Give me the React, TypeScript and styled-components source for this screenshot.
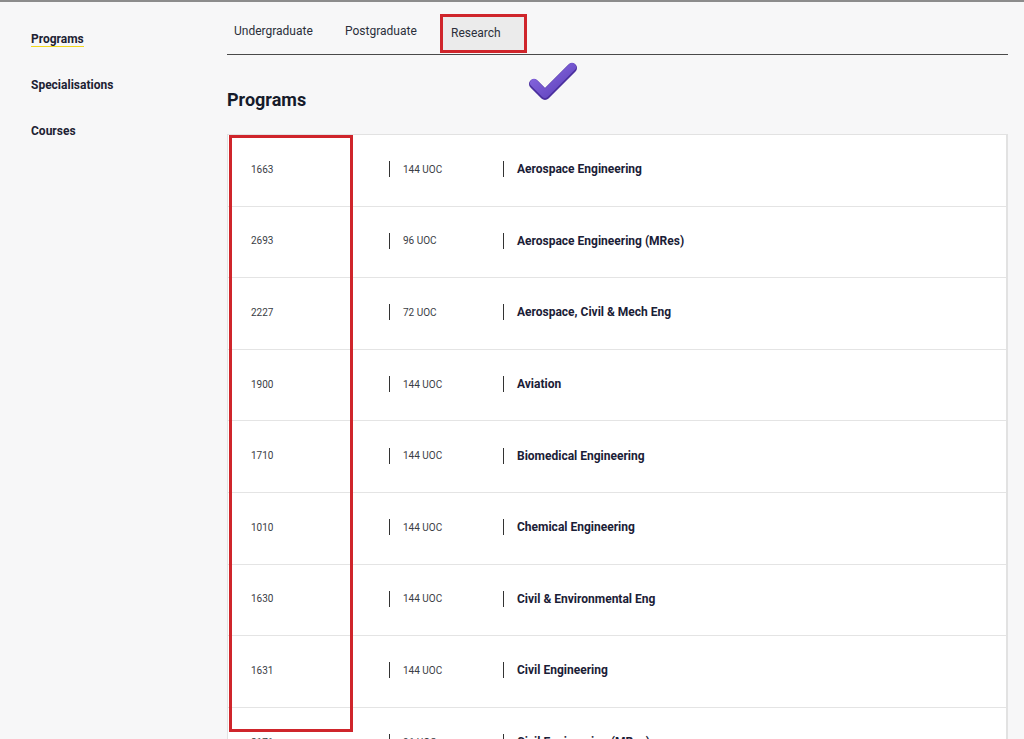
import React from "react";
import styled, { createGlobalStyle } from "styled-components";

const GlobalStyle = createGlobalStyle`
    html, body {
        margin: 0;
        padding: 0;
        background: #f7f7f8;
        font-family: Roboto, "Liberation Sans", sans-serif;
        overflow: hidden;
    }
`

const Page = styled.div`
    display: grid;
    grid-template-columns: 227px 781px;
    border-top: 2px solid #8c8c8c;
    height: 737px;
`

const Sidebar = styled.nav`
    display: flex;
    flex-direction: column;
    gap: 30px;
    padding: 29px 0 0 31px;
`

interface NavItemProps {
    active?: boolean;
}
const NavItem = styled.a<NavItemProps>`
    align-self: flex-start;
    font-size: 12px;
    font-weight: 700;
    line-height: 16px;
    color: #1d2233;
    text-decoration: none;
    ${props => props.active ? `box-shadow: inset 0 -1px 0 #f2d81c;` : ``}
`

const Main = styled.main`
    position: relative;
    display: flex;
    flex-direction: column;
`

const TabBar = styled.div`
    display: flex;
    align-items: flex-start;
    height: 52px;
    border-bottom: 1px solid #4a4a4a;
`

interface TabProps {
    width: number;
}
const Tab = styled.div<TabProps>`
    ${props => `width: ${props.width}px;`}
    padding: 22px 0 0 7px;
    box-sizing: border-box;
    font-size: 12px;
    line-height: 14px;
    color: #2b2f3a;
`

const ActiveTab = styled.div`
    display: flex;
    align-items: center;
    box-sizing: border-box;
    margin-top: 12px;
    height: 39px;
    width: 87px;
    padding: 0 0 2px 8px;
    background: #ebebeb;
    border: 3px solid #cf252b;
    font-size: 12px;
    color: #2b2f3a;
`

const Heading = styled.h2`
    margin: 33px 0 0;
    font-size: 18px;
    line-height: 24px;
    font-weight: 700;
    color: #161b2b;
`

const Table = styled.div`
    position: relative;
    margin-top: 22px;
    background: #fff;
    border: 1px solid #e2e2e2;
    border-right-width: 2px;
`

const Row = styled.div`
    display: grid;
    grid-template-columns: 161px 114px 1fr;
    align-items: center;
    height: 71.6px;
    box-sizing: border-box;
    padding-bottom: 2px;
    border-bottom: 1px solid #e4e4e4;
`

interface CellProps {
    divided?: boolean;
    strong?: boolean;
}
const Cell = styled.div<CellProps>`
    position: relative;
    padding-left: ${props => props.divided ? 14 : 23}px;
    font-size: ${props => props.strong ? 12 : 10}px;
    font-weight: ${props => props.strong ? 700 : 400};
    color: ${props => props.strong ? "#1a2036" : "#3a3d45"};
    white-space: nowrap;
    ${props => props.divided ? `
        &::before {
            content: "";
            position: absolute;
            left: 0;
            top: 50%;
            margin-top: -8px;
            width: 1px;
            height: 16px;
            background: #333;
        }
    ` : ``}
`

const Highlight = styled.div`
    position: absolute;
    left: 1px;
    top: 0;
    width: 124px;
    height: 597px;
    box-sizing: border-box;
    border: 3px solid #cf252b;
    pointer-events: none;
`

const Tick = styled.svg`
    position: absolute;
    left: 297px;
    top: 54px;
`

const programs = [
    { code: "1663", uoc: "144 UOC", name: "Aerospace Engineering" },
    { code: "2693", uoc: "96 UOC", name: "Aerospace Engineering (MRes)" },
    { code: "2227", uoc: "72 UOC", name: "Aerospace, Civil & Mech Eng" },
    { code: "1900", uoc: "144 UOC", name: "Aviation" },
    { code: "1710", uoc: "144 UOC", name: "Biomedical Engineering" },
    { code: "1010", uoc: "144 UOC", name: "Chemical Engineering" },
    { code: "1630", uoc: "144 UOC", name: "Civil & Environmental Eng" },
    { code: "1631", uoc: "144 UOC", name: "Civil Engineering" },
    { code: "2171", uoc: "96 UOC", name: "Civil Engineering (MRes)" },
];

export default function App() {
    return (
        <>
            <GlobalStyle />
            <Page>
                <Sidebar>
                    <NavItem active>Programs</NavItem>
                    <NavItem>Specialisations</NavItem>
                    <NavItem>Courses</NavItem>
                </Sidebar>
                <Main>
                    <TabBar>
                        <Tab width={111}>Undergraduate</Tab>
                        <Tab width={102}>Postgraduate</Tab>
                        <ActiveTab>Research</ActiveTab>
                    </TabBar>
                    <Tick width="56" height="48" viewBox="0 0 56 48">
                        <defs>
                            <linearGradient id="tickGrad" x1="0" y1="0" x2="1" y2="1">
                                <stop offset="0" stopColor="#8b6be3" />
                                <stop offset="1" stopColor="#5b3fb8" />
                            </linearGradient>
                        </defs>
                        <path d="M10 28 L21 39 L48 12" fill="none" stroke="#4a2f9e" strokeWidth="10" strokeLinecap="round" strokeLinejoin="round" />
                        <path d="M10 27 L21 38 L48 11" fill="none" stroke="url(#tickGrad)" strokeWidth="8" strokeLinecap="round" strokeLinejoin="round" />
                    </Tick>
                    <Heading>Programs</Heading>
                    <Table>
                        {programs.map(p => (
                            <Row key={p.code}>
                                <Cell>{p.code}</Cell>
                                <Cell divided>{p.uoc}</Cell>
                                <Cell divided strong>{p.name}</Cell>
                            </Row>
                        ))}
                        <Highlight />
                    </Table>
                </Main>
            </Page>
        </>
    );
}
